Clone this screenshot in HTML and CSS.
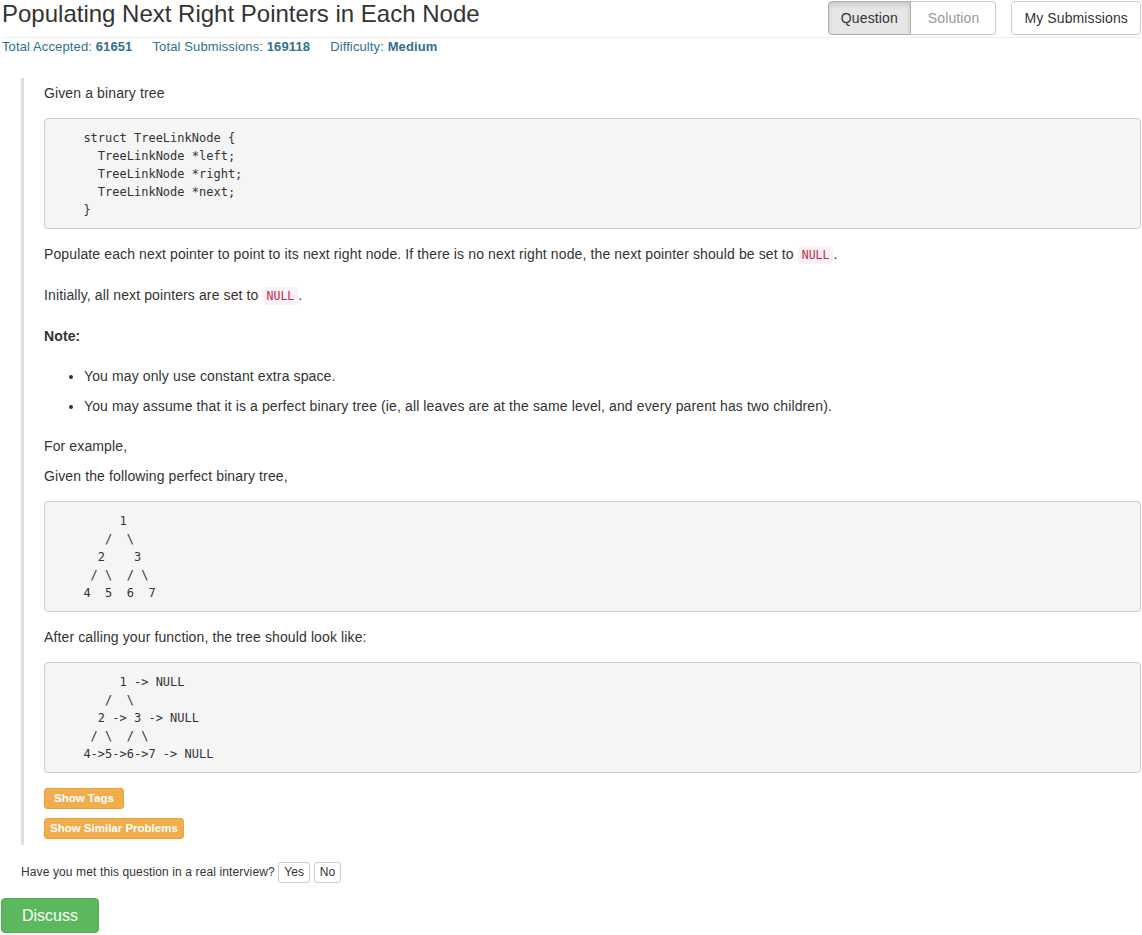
FILE: index.html
```html
<!DOCTYPE html>
<html>
<head>
<meta charset="utf-8">
<title>Populating Next Right Pointers in Each Node</title>
<link rel="stylesheet" href="styles.css">
</head>
<body>
<div class="q-header">
  <h3 class="q-title">Populating Next Right Pointers in Each Node</h3>
  <div class="q-actions">
    <div class="btn-group">
      <span class="btn btn-default active">Question</span><span class="btn btn-default muted">Solution</span>
    </div>
    <span class="btn btn-default">My Submissions</span>
  </div>
</div>
<div class="q-stats">
  <span class="stat">Total Accepted: <strong>61651</strong></span>
  <span class="stat">Total Submissions: <strong>169118</strong></span>
  <span class="stat">Difficulty: <strong>Medium</strong></span>
</div>

<blockquote class="q-content">
  <p>Given a binary tree</p>
<pre class="code">    struct TreeLinkNode {
      TreeLinkNode *left;
      TreeLinkNode *right;
      TreeLinkNode *next;
    }</pre>
  <p class="p-lg">Populate each next pointer to point to its next right node. If there is no next right node, the next pointer should be set to <code>NULL</code>.</p>
  <p class="p-lg">Initially, all next pointers are set to <code>NULL</code>.</p>
  <p class="p-note"><b>Note:</b></p>
  <ul class="notes">
    <li>You may only use constant extra space.</li>
    <li>You may assume that it is a perfect binary tree (ie, all leaves are at the same level, and every parent has two children).</li>
  </ul>
  <p class="p-tight">For example,</p>
  <p>Given the following perfect binary tree,</p>
<pre class="code">         1
       /  \
      2    3
     / \  / \
    4  5  6  7</pre>
  <p>After calling your function, the tree should look like:</p>
<pre class="code">         1 -&gt; NULL
       /  \
      2 -&gt; 3 -&gt; NULL
     / \  / \
    4-&gt;5-&gt;6-&gt;7 -&gt; NULL</pre>
  <div class="tag-btns">
    <span class="btn-warn btn-tags">Show Tags</span>
    <span class="btn-warn btn-similar">Show Similar Problems</span>
  </div>
</blockquote>

<div class="interview">
  Have you met this question in a real interview? <span class="btn-xs">Yes</span> <span class="btn-xs">No</span>
</div>
<div class="discuss-row">
  <span class="btn-discuss">Discuss</span>
</div>
</body>
</html>
```

FILE: styles.css
```css
html, body {
  margin: 0;
  padding: 0;
  background: #fff;
}
body {
  font-family: "Liberation Sans", Arial, sans-serif;
  font-size: 14px;
  line-height: 20px;
  letter-spacing: 0.12px;
  color: #333;
}

.q-header {
  display: flex;
  justify-content: space-between;
  align-items: flex-start;
  box-sizing: border-box;
  height: 38px;
  margin: 0 1px 0 2px;
  padding-top: 1px;
  border-bottom: 1px solid #eee;
}
.q-title {
  margin: -1px 0 0;
  font-size: 24px;
  font-weight: normal;
  line-height: 28px;
  letter-spacing: 0;
  color: #333;
}
.q-actions {
  display: flex;
  gap: 15px;
}
.btn-group {
  display: flex;
}
.btn {
  display: inline-block;
  padding: 6px 12px;
  font-size: 14px;
  line-height: 20px;
  border: 1px solid #ccc;
  border-radius: 4px;
  background: #fff;
  color: #333;
  white-space: nowrap;
}
.btn-group .btn:first-child {
  border-top-right-radius: 0;
  border-bottom-right-radius: 0;
}
.btn-group .btn:last-child {
  border-top-left-radius: 0;
  border-bottom-left-radius: 0;
  border-left: none;
}
.btn.active {
  background: #e6e6e6;
  border-color: #adadad;
  box-shadow: inset 0 3px 5px rgba(0, 0, 0, 0.125);
}
.btn.muted {
  color: #999;
  padding: 6px 16px 6px 17px;
}

.q-stats {
  margin-left: 2px;
  font-size: 13px;
  line-height: 17px;
  color: #31708f;
  display: flex;
  gap: 20px;
}
.q-stats strong {
  font-weight: bold;
}

.q-content {
  margin: 23px 1px 0 21px;
  padding: 5px 0 6px 20px;
  border-left: 3px solid #ddd;
}
.q-content p {
  margin: 0 0 15px;
}
.q-content p.p-lg {
  margin-bottom: 21px;
}
.q-content p.p-note {
  margin-bottom: 20px;
}
.q-content p.p-tight {
  margin-bottom: 10px;
}
.notes {
  margin: 0 0 20px;
  padding-left: 40px;
}
.notes li {
  margin-bottom: 10px;
}
.notes li:last-child {
  margin-bottom: 0;
}

.code {
  margin: 0 0 15px;
  padding: 9.5px 9.5px;
  background: #f5f5f5;
  border: 1px solid #ccc;
  border-radius: 4px;
  font-family: "DejaVu Sans Mono", "Liberation Mono", monospace;
  font-size: 12px;
  line-height: 18px;
  letter-spacing: 0;
  color: #333;
}

code {
  font-family: "DejaVu Sans Mono", "Liberation Mono", monospace;
  font-size: 11.5px;
  line-height: 1;
  letter-spacing: 0;
  padding: 2px 4px;
  color: #c7254e;
  background: #f9f2f4;
  border-radius: 4px;
}

.tag-btns {
  display: flex;
  flex-direction: column;
  align-items: flex-start;
  gap: 9px;
}
.btn-warn {
  display: inline-block;
  font-size: 11.5px;
  font-weight: bold;
  line-height: 17px;
  letter-spacing: 0;
  padding: 1px 5px;
  color: #fff;
  background: #f0ad4e;
  border: 1px solid #eea236;
  border-radius: 3px;
  white-space: nowrap;
}
.btn-tags {
  padding: 1px 9px;
}

.interview {
  margin: 17px 0 0 21px;
  font-size: 12px;
  line-height: 21px;
  color: #333;
}
.btn-xs {
  display: inline-block;
  padding: 1px 5px;
  font-size: 12px;
  line-height: 17px;
  border: 1px solid #ccc;
  border-radius: 3px;
  background: #fff;
  color: #333;
  vertical-align: top;
}

.discuss-row {
  margin: 15px 0 0 1px;
}
.btn-discuss {
  display: inline-block;
  padding: 6px 20px;
  font-size: 16px;
  line-height: 21px;
  letter-spacing: 0;
  color: #fff;
  background: #5cb85c;
  border: 1px solid #4cae4c;
  border-radius: 4px;
}
```
